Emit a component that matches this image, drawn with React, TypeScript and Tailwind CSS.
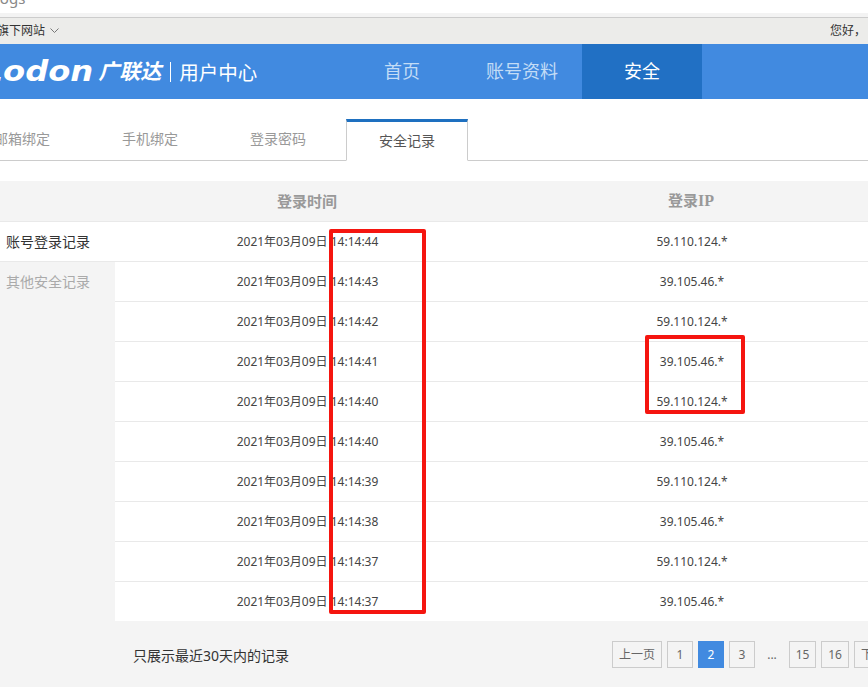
const font = "[font-family:'Noto_Sans','Noto_Sans_CJK_SC',sans-serif]";

const rows = [
  ["14:14:44", "59.110.124.*"],
  ["14:14:43", "39.105.46.*"],
  ["14:14:42", "59.110.124.*"],
  ["14:14:41", "39.105.46.*"],
  ["14:14:40", "59.110.124.*"],
  ["14:14:40", "39.105.46.*"],
  ["14:14:39", "59.110.124.*"],
  ["14:14:38", "39.105.46.*"],
  ["14:14:37", "59.110.124.*"],
  ["14:14:37", "39.105.46.*"],
];

function PageButton({ label, width, active }: { label: string; width: string; active?: boolean }) {
  return (
    <span
      className={`flex h-[27px] shrink-0 items-center justify-center border text-xs ${width} ${
        active ? "border-[#418ae0] bg-[#418ae0] text-white" : "border-[#ccc] text-[#666]"
      }`}
    >
      {label}
    </span>
  );
}

export default function App() {
  return (
    <div className={`relative h-[687px] w-[868px] overflow-hidden bg-white ${font}`}>
      {/* browser tab leftovers */}
      <div className="h-[13px] overflow-hidden">
        <p className="-ml-[4px] -mt-[12px] text-[15px] leading-5 text-[#888]">logs</p>
      </div>
      <div className="h-[5px] border-b border-[#ccc] bg-[#f3f3f3]" />

      {/* top bar */}
      <div className="flex h-[26px] items-center justify-between bg-[#ececea] text-xs text-[#333]">
        <div className="-ml-[3px] flex items-center gap-[5px]">
          <span>旗下网站</span>
          <svg width="9" height="6" viewBox="0 0 9 6" fill="none" stroke="#777" strokeWidth="1">
            <path d="M0.5 0.5 L4.5 4.5 L8.5 0.5" />
          </svg>
        </div>
        <span className="mr-[2px]">您好，</span>
      </div>

      {/* header */}
      <div className="flex h-[55px] bg-[#418ae0] text-white">
        <div className="flex w-[342px] shrink-0 items-center overflow-hidden">
          <span className="-ml-[3px] origin-right scale-x-[1.15] text-[28px] font-bold italic leading-none [font-family:'DejaVu_Sans',sans-serif]">
            Lodon
          </span>
          <span className="ml-[5px] text-[21px] font-bold italic leading-none">广联达</span>
          <span className="ml-[9px] h-[20px] w-px bg-white" />
          <span className="ml-[8px] mt-[2px] text-[19.5px] leading-none">用户中心</span>
        </div>
        <div className="flex w-[120px] items-center justify-center pb-[1px] text-lg text-[#c3dcf6]">首页</div>
        <div className="flex w-[120px] items-center justify-center pb-[1px] text-lg text-[#c3dcf6]">账号资料</div>
        <div className="flex w-[120px] items-center justify-center bg-[#2170c4] pb-[1px] text-lg">安全</div>
      </div>

      {/* tabs */}
      <div className="flex h-[62px] items-end border-b border-[#ccc] text-sm text-[#999]">
        <div className="-ml-[42px] flex h-[41px] w-[128px] items-center justify-center pb-[1px]">邮箱绑定</div>
        <div className="flex h-[41px] w-[128px] items-center justify-center pb-[1px]">手机绑定</div>
        <div className="flex h-[41px] w-[128px] items-center justify-center pb-[1px]">登录密码</div>
        <div className="relative -mb-px ml-[4px] flex h-[42px] w-[122px] items-center justify-center border-x border-b border-t-[3px] border-x-[#ccc] border-b-white border-t-[#1e70c0] pb-[1px] text-[#555]">
          安全记录
        </div>
      </div>

      <div className="h-[20px]" />

      {/* records */}
      <div className="flex">
        <div className="w-[115px] shrink-0 bg-[#f4f4f4] text-sm">
          <div className="h-[41px] border-b border-[#e9e9e9]" />
          <div className="flex h-[40px] items-center border-b border-[#e9e9e9] bg-white pl-[6px] text-[#333]">
            账号登录记录
          </div>
          <div className="flex h-[39px] items-center pl-[6px] text-[#aaa]">其他安全记录</div>
        </div>
        <div className="w-[768px] shrink-0">
          <div className="grid h-[41px] grid-cols-2 items-center border-b border-[#e9e9e9] bg-[#f4f4f4] text-center text-[15px] font-bold text-[#999]">
            <span>登录时间</span>
            <span>
              登录<span className="text-base [font-family:'Liberation_Serif',serif]">IP</span>
            </span>
          </div>
          {rows.map(([time, ip], i) => (
            <div
              key={i}
              className="grid h-[40px] grid-cols-2 items-center border-b border-[#e9e9e9] text-center text-xs text-[#444] last:h-[39px] last:border-b-0"
            >
              <span className="pl-[1px]">2021年03月09日 {time}</span>
              <span className="pl-[2px]">{ip}</span>
            </div>
          ))}
        </div>
      </div>

      {/* footer */}
      <div className="flex h-[66px] items-start bg-[#f4f4f4] pl-[133px] pt-[20px]">
        <span className="mt-[1px] w-[479px] shrink-0 text-sm leading-[27px] text-[#333]">只展示最近30天内的记录</span>
        <div className="flex shrink-0 items-center gap-[5px]">
          <PageButton label="上一页" width="w-[50px]" />
          <PageButton label="1" width="w-[26px]" />
          <PageButton label="2" width="w-[26px]" active />
          <PageButton label="3" width="w-[26px]" />
          <span className="w-[24px] text-center text-xs text-[#666]">...</span>
          <PageButton label="15" width="w-[27px]" />
          <PageButton label="16" width="w-[28px]" />
          <PageButton label="下一页" width="w-[50px]" />
        </div>
      </div>

      {/* red annotation boxes */}
      <div className="absolute left-[329px] top-[229px] h-[385px] w-[97px] rounded-[2px] border-[4px] border-[#f5150f]" />
      <div className="absolute left-[645px] top-[335px] h-[79px] w-[100px] rounded-[2px] border-[4px] border-[#f5150f]" />
    </div>
  );
}
